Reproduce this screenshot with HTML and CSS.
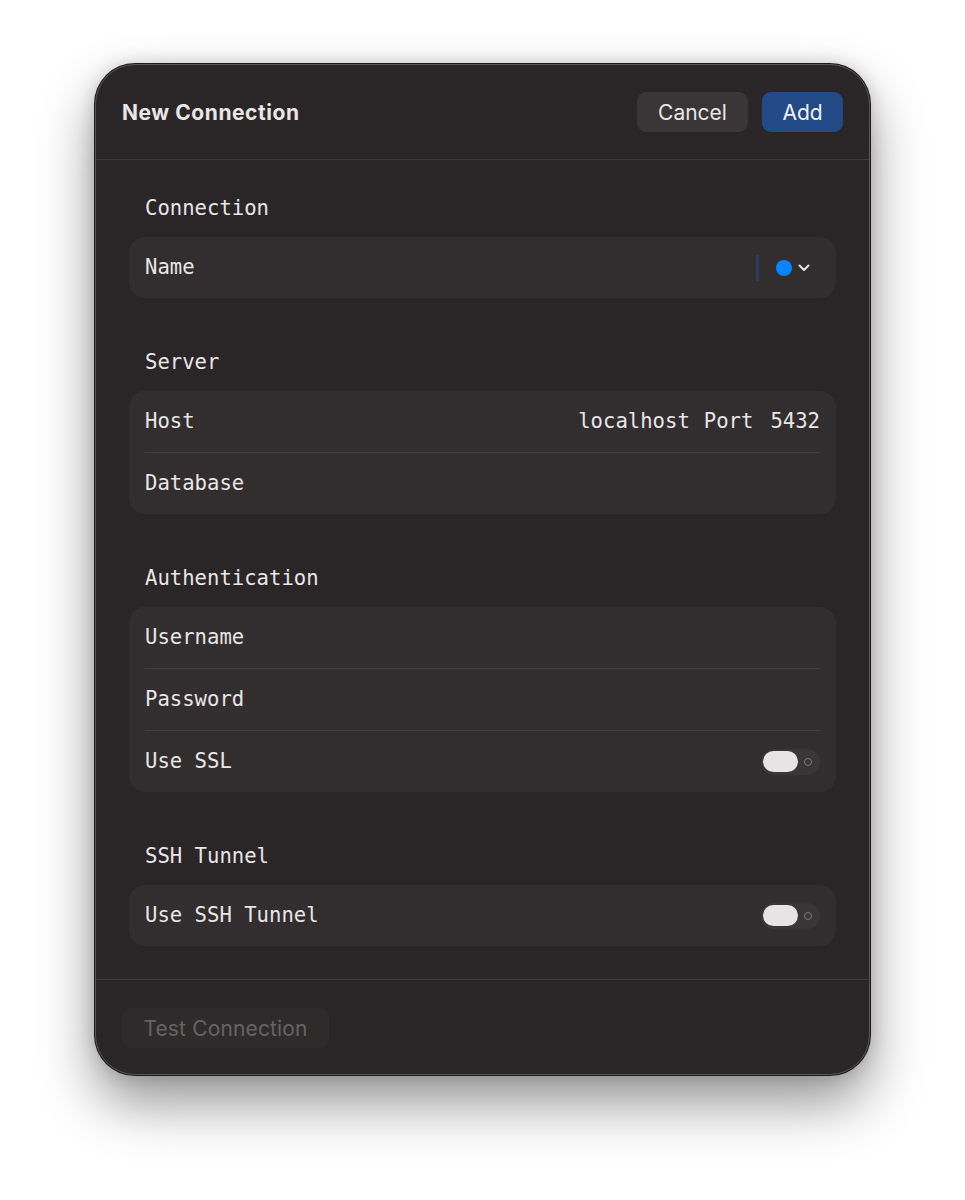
FILE: index.html
```html
<!DOCTYPE html>
<html>
<head>
<meta charset="utf-8">
<link rel="stylesheet" href="styles.css">
</head>
<body>
<div class="window">
  <header class="titlebar">
    <h1 class="title">New Connection</h1>
    <div class="actions">
      <button class="btn btn-cancel">Cancel</button>
      <button class="btn btn-add">Add</button>
    </div>
  </header>
  <main class="content">
    <section class="section">
      <div class="section-label">Connection</div>
      <div class="card">
        <div class="row">
          <span class="label">Name</span>
          <span class="name-accessory">
            <span class="caret"></span>
            <span class="dot"></span>
            <svg class="chev" width="12" height="8" viewBox="0 0 12 8"><path d="M1.5 1.5 L6 6 L10.5 1.5" fill="none" stroke="#e8e6e6" stroke-width="2" stroke-linecap="round" stroke-linejoin="round"/></svg>
          </span>
        </div>
      </div>
    </section>
    <section class="section">
      <div class="section-label">Server</div>
      <div class="card">
        <div class="row">
          <span class="label">Host</span>
          <span class="host-values"><span>localhost</span><span class="port-label">Port</span><span>5432</span></span>
        </div>
        <div class="divider"></div>
        <div class="row"><span class="label">Database</span></div>
      </div>
    </section>
    <section class="section">
      <div class="section-label">Authentication</div>
      <div class="card">
        <div class="row"><span class="label">Username</span></div>
        <div class="divider"></div>
        <div class="row"><span class="label">Password</span></div>
        <div class="divider"></div>
        <div class="row">
          <span class="label">Use SSL</span>
          <span class="toggle"><span class="knob"></span><span class="ring"></span></span>
        </div>
      </div>
    </section>
    <section class="section">
      <div class="section-label">SSH Tunnel</div>
      <div class="card">
        <div class="row">
          <span class="label">Use SSH Tunnel</span>
          <span class="toggle"><span class="knob"></span><span class="ring"></span></span>
        </div>
      </div>
    </section>
  </main>
  <footer class="footer">
    <button class="btn btn-test">Test Connection</button>
  </footer>
</div>
</body>
</html>
```

FILE: styles.css
```css
* { box-sizing: border-box; }
html, body { margin: 0; padding: 0; background: #ffffff; }
body { padding: 64px 0 0 95px; height: 1200px; overflow: hidden; }

.window {
  width: 775px;
  height: 1011px;
  background: #2a2526;
  border-radius: 40px;
  border: 1px solid #5a5556;
  box-shadow: 0 0 0 1px #1c1a1a, 0 28px 55px rgba(0,0,0,0.42), 0 0 18px rgba(0,0,0,0.18);
  display: flex;
  flex-direction: column;
  overflow: hidden;
}

.titlebar {
  height: 95px;
  flex: none;
  display: flex;
  align-items: center;
  justify-content: space-between;
  padding: 0 26px 0 26px;
  border-bottom: 1px solid #3f3a3b;
}
.title {
  margin: 0;
  font-family: Inter, "Liberation Sans", sans-serif;
  font-weight: 700;
  font-size: 21px;
  color: #e9e6e6;
  letter-spacing: 0.55px;
}
.actions { display: flex; gap: 14px; }
.btn {
  font-family: Inter, "Liberation Sans", sans-serif;
  font-size: 21px;
  border: none;
  border-radius: 9px;
  height: 40px;
  padding: 0;
}
.btn-cancel { width: 111px; background: #3a3536; color: #e8e6e6; }
.btn-add { width: 81px; background: #224a87; color: #f2f2f4; }

.content {
  flex: none;
  padding: 36px 33px 33px 33px;
  display: flex;
  flex-direction: column;
  gap: 52px;
  border-bottom: 1px solid #3f3a3b;
}
.section { display: flex; flex-direction: column; gap: 16px; }
.section-label, .label, .host-values {
  font-family: "DejaVu Sans Mono", "Liberation Mono", monospace;
  font-size: 20.6px;
  color: #e8e6e6;
  line-height: 25px;
}
.section-label { padding-left: 16px; }
.card {
  background: #322d2e;
  border-radius: 16px;
  padding: 0 16px;
}
.row {
  height: 61px;
  display: flex;
  align-items: center;
  justify-content: space-between;
}
.divider { height: 1px; background: #433e3f; }

.name-accessory { display: flex; align-items: center; margin-right: 10px; }
.caret { width: 3px; height: 26px; background: #2b3e5f; border-radius: 1px; margin-right: 17px; }
.dot { width: 16px; height: 16px; border-radius: 50%; background: #0a84ff; margin-right: 6px; }
.chev { display: block; }

.host-values { display: flex; }
.port-label { margin: 0 17px 0 14px; }

.toggle {
  width: 59px;
  height: 26px;
  border-radius: 13px;
  background: #3a3536;
  display: flex;
  align-items: center;
  padding: 0 2px;
}
.knob { width: 35px; height: 21px; border-radius: 11px; background: #e6e4e4; }
.ring {
  width: 8px; height: 8px;
  border-radius: 50%;
  border: 1.5px solid #7c7778;
  margin-left: 6px;
}

.footer {
  flex: 1;
  padding: 28px 0 0 26px;
}
.btn-test {
  width: 207px;
  height: 40px;
  background: #2f2a2b;
  color: #676263;
  border-radius: 9px;
  letter-spacing: 0.15px;
}
```
